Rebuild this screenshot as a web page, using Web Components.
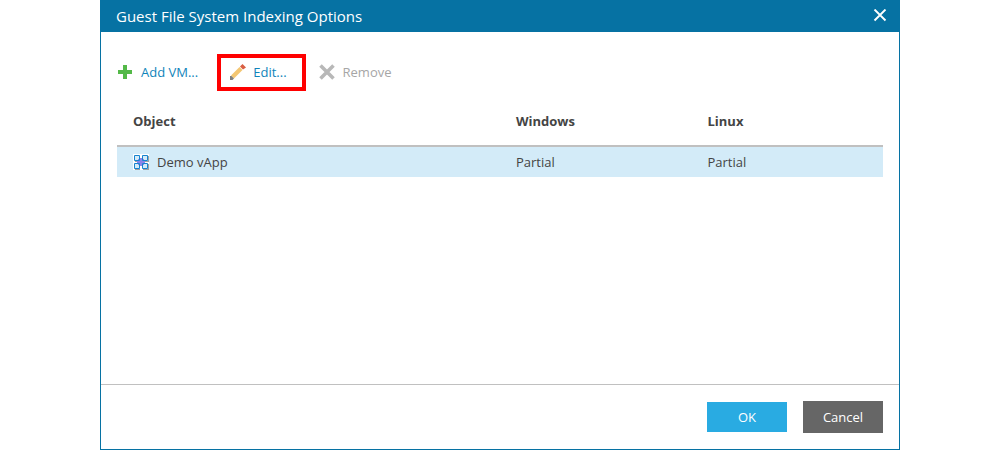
<!DOCTYPE html>
<html lang="en">
<head>
<meta charset="utf-8">
<meta name="viewport" content="width=device-width, initial-scale=1">
<title>Guest File System Indexing Options</title>
<style>
  body { margin: 0; background: #fff; color: #444; font: 13px/18px "Open Sans", sans-serif; }
</style>
</head>
<body>
<app-dialog heading="Guest File System Indexing Options">
  <tool-bar slot="tools">
    <tool-button icon="add">Add VM...</tool-button>
    <tool-button icon="edit" marked>Edit...</tool-button>
    <tool-button icon="remove" disabled>Remove</tool-button>
  </tool-bar>
  <object-table></object-table>
  <dialog-button slot="actions" kind="primary">OK</dialog-button>
  <dialog-button slot="actions">Cancel</dialog-button>
</app-dialog>
<script>
class BaseElement extends HTMLElement {
  render(html) {
    const t = document.createElement('template');
    t.innerHTML = html;
    this.attachShadow({ mode: 'open' }).append(t.content.cloneNode(true));
  }
}

customElements.define('app-dialog', class extends BaseElement {
  connectedCallback() {
    if (this.shadowRoot) return;
    this.render(`
      <style>
        :host { display: flex; flex-direction: column; box-sizing: border-box; width: 80%; min-height: 100vh;
          margin: 0 auto; border: 1px solid #0672a3; border-top: 0; background: #fff; }
        header { display: flex; align-items: center; justify-content: space-between; height: 32px;
          padding: 0 12px 0 15px; background: #0672a3; color: #fff; }
        h1 { margin: 0; font-size: 15px; line-height: 20px; font-weight: 400; }
        .close { display: flex; padding: 0; border: 0; background: none; color: inherit; cursor: pointer; }
        main { flex: 1; padding: 22px 16px 16px; }
        footer { display: flex; align-items: center; justify-content: flex-end; gap: 16px; height: 64px;
          padding: 0 16px; border-top: 1px solid #c0c0c0; }
      </style>
      <header>
        <h1></h1>
        <button class="close" aria-label="Close">
          <svg width="14" height="14" viewBox="0 0 14 14"><path d="M1.500 .5l11 11M12.500 .5l-11 11" stroke="currentColor" stroke-width="1.900"/></svg>
        </button>
      </header>
      <main><slot name="tools"></slot><slot></slot></main>
      <footer><slot name="actions"></slot></footer>`);
    this.shadowRoot.querySelector('h1').textContent = this.getAttribute('heading');
  }
});

customElements.define('tool-bar', class extends BaseElement {
  connectedCallback() {
    if (this.shadowRoot) return;
    this.render(`<style>:host { display: flex; align-items: center; height: 37px; margin-bottom: 6px; }</style><slot></slot>`);
  }
});

const ICONS = {
  add: '<path d="M6 1h4v5h5v4h-5v5H6v-5H1V6h5z" fill="#54b948"/>',
  edit: '<path d="M2 11.500L10.500 3l3 3L5 14.500z" fill="#f3c672"/><path d="M11 2.500L13.500 0 17 3.500 14 5.500z" fill="#d95f43"/><path d="M1 12h1.500L5 14.500 3.500 16H1z" fill="#808080"/>',
  remove: '<path d="M1.500 1.500l13 13M14.500 1.500l-13 13" stroke="#b8b8b8" stroke-width="3.600"/>'
};

customElements.define('tool-button', class extends BaseElement {
  connectedCallback() {
    if (this.shadowRoot) return;
    this.render(`
      <style>
        :host { display: block; }
        :host([marked]) { margin: 0 13px 0 19px; }
        button { display: flex; align-items: center; gap: 8px; padding: 0 0 1px; border: 0; background: none;
          color: #0f84ba; font: inherit; cursor: pointer; }
        :host([marked]) button { box-sizing: border-box; height: 37px; padding: 0 15px 1px 8px; border: 4px solid #f00; }
        svg { overflow: visible; }
        button:disabled { color: #a6a6a6; cursor: default; }
      </style>
      <button><svg width="16" height="16" viewBox="0 0 16 16" aria-hidden="true">${ICONS[this.getAttribute('icon')]}</svg><span><slot></slot></span></button>`);
    this.shadowRoot.querySelector('button').disabled = this.hasAttribute('disabled');
  }
});

customElements.define('object-table', class extends BaseElement {
  connectedCallback() {
    if (this.shadowRoot) return;
    this.render(`
      <style>
        :host { display: block; }
        table { width: 100%; table-layout: fixed; border-collapse: separate; border-spacing: 0; }
        th, td { padding: 0 16px; text-align: left; vertical-align: middle; }
        th { height: 48px; border-bottom: 2px solid #c0c0c0; font-weight: 700; }
        td { height: 30px; background: #d3ebf8; }
        th:first-child { width: 50%; box-sizing: border-box; }
        .name { display: flex; align-items: center; gap: 8px; }
      </style>
      <table>
        <thead><tr><th scope="col">Object</th><th scope="col">Windows</th><th scope="col">Linux</th></tr></thead>
        <tbody><tr>
          <td><span class="name"><svg width="16" height="16" viewBox="0 0 16 16" aria-hidden="true">
            <path d="M0 0h8v8H0zM8 0h8v8H8zM0 8h8v8H0zM8 8h8v8H8z" fill="#fff"/>
            <path d="M2 7h5v1H2zM10 7h5v1h-5zM15 2h1v6h-1zM2 15h5v1H2zM10 15h6v1h-6zM15 10h1v6h-1z" fill="#a0a0a0"/>
            <path d="M6 4h4v2h2v4h-2v2H6v-2H4V6h2z" fill="#8b84e8"/>
            <path d="M1.500 1.500h5v5h-5zM9.500 1.500h5v5h-5zM1.500 9.500h5v5h-5zM9.500 9.500h5v5h-5z" fill="#d3ebf8" stroke="#1683d0"/>
            <path d="M5 5h1v1H5zM10 5h1v1h-1zM5 10h1v1H5zM10 10h1v1h-1z" fill="#8b84e8"/>
          </svg>Demo vApp</span></td>
          <td>Partial</td><td>Partial</td>
        </tr></tbody>
      </table>`);
  }
});

customElements.define('dialog-button', class extends BaseElement {
  connectedCallback() {
    if (this.shadowRoot) return;
    this.render(`
      <style>
        :host { display: block; }
        button { display: block; width: 80px; height: 32px; padding: 0; border: 0; background: #666; color: #fff; font: inherit; cursor: pointer; }
        :host([kind="primary"]) button { height: 30px; background: #29abe2; }
      </style>
      <button><slot></slot></button>`);
  }
});
</script>
</body>
</html>
